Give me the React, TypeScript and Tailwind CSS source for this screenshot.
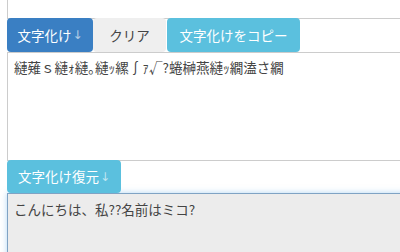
const garbled = "縺薙ｓ縺ｫ縺｡縺ｯ縲∫ｧ√?蜷榊燕縺ｯ繝溘さ繝";
const restored = "こんにちは、私??名前はミコ?";

const font = { fontFamily: '"Noto Sans CJK JP", "Noto Sans", sans-serif' };

const Arrow = () => (
  <span className="ml-px font-['DejaVu_Sans',sans-serif] text-[12px] opacity-60">↓</span>
);

const App = () => {
  return (
    <div className="w-[400px] h-[252px] overflow-hidden bg-white pl-[7px]" style={font}>
      <div className="w-[440px]">
        <div className="h-[19px] border-l border-b border-[#cccccc]" />

        <div className="relative -mt-px flex h-[34px] text-[13.5px]">
          <button className="flex w-[86px] items-center justify-center rounded-[4px] bg-[#3a7fc3] text-white">
            文字化け
            <Arrow />
          </button>
          <button className="flex w-[73px] items-center justify-center rounded-[4px] bg-[#efefef] text-[#444]">
            クリア
          </button>
          <button className="ml-px flex w-[133px] items-center justify-center rounded-[4px] bg-[#5bc0de] text-white">
            文字化けをコピー
          </button>
        </div>

        <textarea
          readOnly
          defaultValue={garbled}
          className="block h-[109px] w-full resize-none border border-[#cccccc] px-[6px] py-[4px] text-[13.5px] leading-5 text-[#444] outline-none"
        />

        <div className="relative -mt-px flex h-[33px] text-[13.5px]">
          <button className="flex w-[114px] items-center justify-center rounded-[4px] bg-[#5bc0de] text-white">
            文字化け復元
            <Arrow />
          </button>
        </div>

        <textarea
          readOnly
          defaultValue={restored}
          className="block h-[80px] w-full resize-none border border-[#7fa3c4] bg-[#ececec] px-[6px] py-[5px] text-[13.5px] leading-5 text-[#444] shadow-[0_0_6px_rgba(102,175,233,0.5)] outline-none"
        />
      </div>
    </div>
  );
};

export default App;
